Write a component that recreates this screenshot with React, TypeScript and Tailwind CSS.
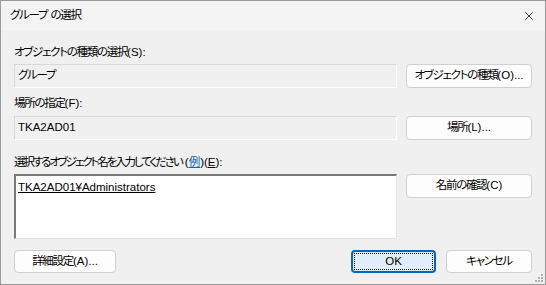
import { X } from 'lucide-react'

const font = "font-['Liberation_Sans','Noto_Sans_CJK_JP',sans-serif] [font-feature-settings:'palt']"

// Japanese runs are set tighter to match Yu Gothic UI widths
function J({ children, tight }: { children: React.ReactNode; tight?: boolean }) {
  return <span className={tight ? 'tracking-[-2.1px]' : 'tracking-[-1.3px]'}>{children}</span>
}

function Btn({ children }: { children: React.ReactNode }) {
  return (
    <div className="h-[24px] w-[126px] rounded-[4px] border border-[#d0d0d0] bg-[#fdfdfd] flex items-center justify-center whitespace-nowrap">
      {children}
    </div>
  )
}

export default function App() {
  return (
    <div className={`relative w-[546px] h-[285px] border border-[#9a9a9a] bg-[#f0f0f0] text-[11.5px] text-black ${font}`}>
      <div className="h-[30px] bg-[#f3f3f3] flex items-center justify-between pl-[9px] pr-[9px]">
        <span><J>グループ</J> <J>の選択</J></span>
        <X size={14} strokeWidth={1.3} />
      </div>

      <div className="pl-[13px] pr-[13px]">
        <div className="mt-[13px] leading-[16px]"><J>オブジェクトの種類の選択</J>(S):</div>
        <div className="mt-[4px] flex gap-[9px]">
          <div className="w-[383px] h-[24px] border border-t-[#d9d9d9] border-l-[#d9d9d9] border-b-white border-r-white flex items-center pl-[3px]">
            <J>グループ</J>
          </div>
          <Btn><J>オブジェクトの種類</J>(O)...</Btn>
        </div>

        <div className="mt-[7px] leading-[16px]"><J>場所の指定</J>(F):</div>
        <div className="mt-[5px] flex gap-[9px]">
          <div className="w-[383px] h-[24px] border border-t-[#d9d9d9] border-l-[#d9d9d9] border-b-white border-r-white flex items-center pl-[3px]">
            TKA2AD01
          </div>
          <Btn><J>場所</J>(L)...</Btn>
        </div>

        <div className="mt-[14px] leading-[16px]">
          <J tight>選択するオブジェクト名を入力してください</J> (<span className="text-[#0066cc] underline">例</span>)(<span className="underline">E</span>):
        </div>
        <div className="mt-[4px] flex gap-[9px] items-start">
          <div className="w-[383px] h-[65px] bg-white border-t-2 border-l-2 border-t-[#7a7a7a] border-l-[#7a7a7a] border-b border-r border-b-[#e3e3e3] border-r-[#e3e3e3] pl-[2px] pt-[3px]">
            <span className="underline">TKA2AD01¥Administrators</span>
          </div>
          <Btn><J>名前の確認</J>(C)</Btn>
        </div>

        <div className="mt-[11px] flex items-center">
          <div className="h-[23px] w-[102px] rounded-[4px] border border-[#d0d0d0] bg-[#fdfdfd] flex items-center justify-center">
            <J>詳細設定</J>(A)...
          </div>
          <div className="ml-auto h-[23px] w-[85px] rounded-[4px] border-2 border-[#0067c0] bg-[#e0eef9] p-[1px]">
            <div className="h-full w-full border border-dotted border-black flex items-center justify-center">OK</div>
          </div>
          <div className="ml-[10px] h-[23px] w-[86px] rounded-[4px] border border-[#d0d0d0] bg-[#fdfdfd] flex items-center justify-center">
            <J>キャンセル</J>
          </div>
        </div>
      </div>

      <svg className="absolute right-[2px] bottom-[2px]" width="8" height="8" viewBox="0 0 8 8">
        <rect x="6" y="0" width="2" height="2" fill="#b0b0b0" />
        <rect x="3" y="3" width="2" height="2" fill="#b0b0b0" />
        <rect x="6" y="3" width="2" height="2" fill="#b0b0b0" />
        <rect x="0" y="6" width="2" height="2" fill="#b0b0b0" />
        <rect x="3" y="6" width="2" height="2" fill="#b0b0b0" />
        <rect x="6" y="6" width="2" height="2" fill="#b0b0b0" />
      </svg>
    </div>
  )
}
